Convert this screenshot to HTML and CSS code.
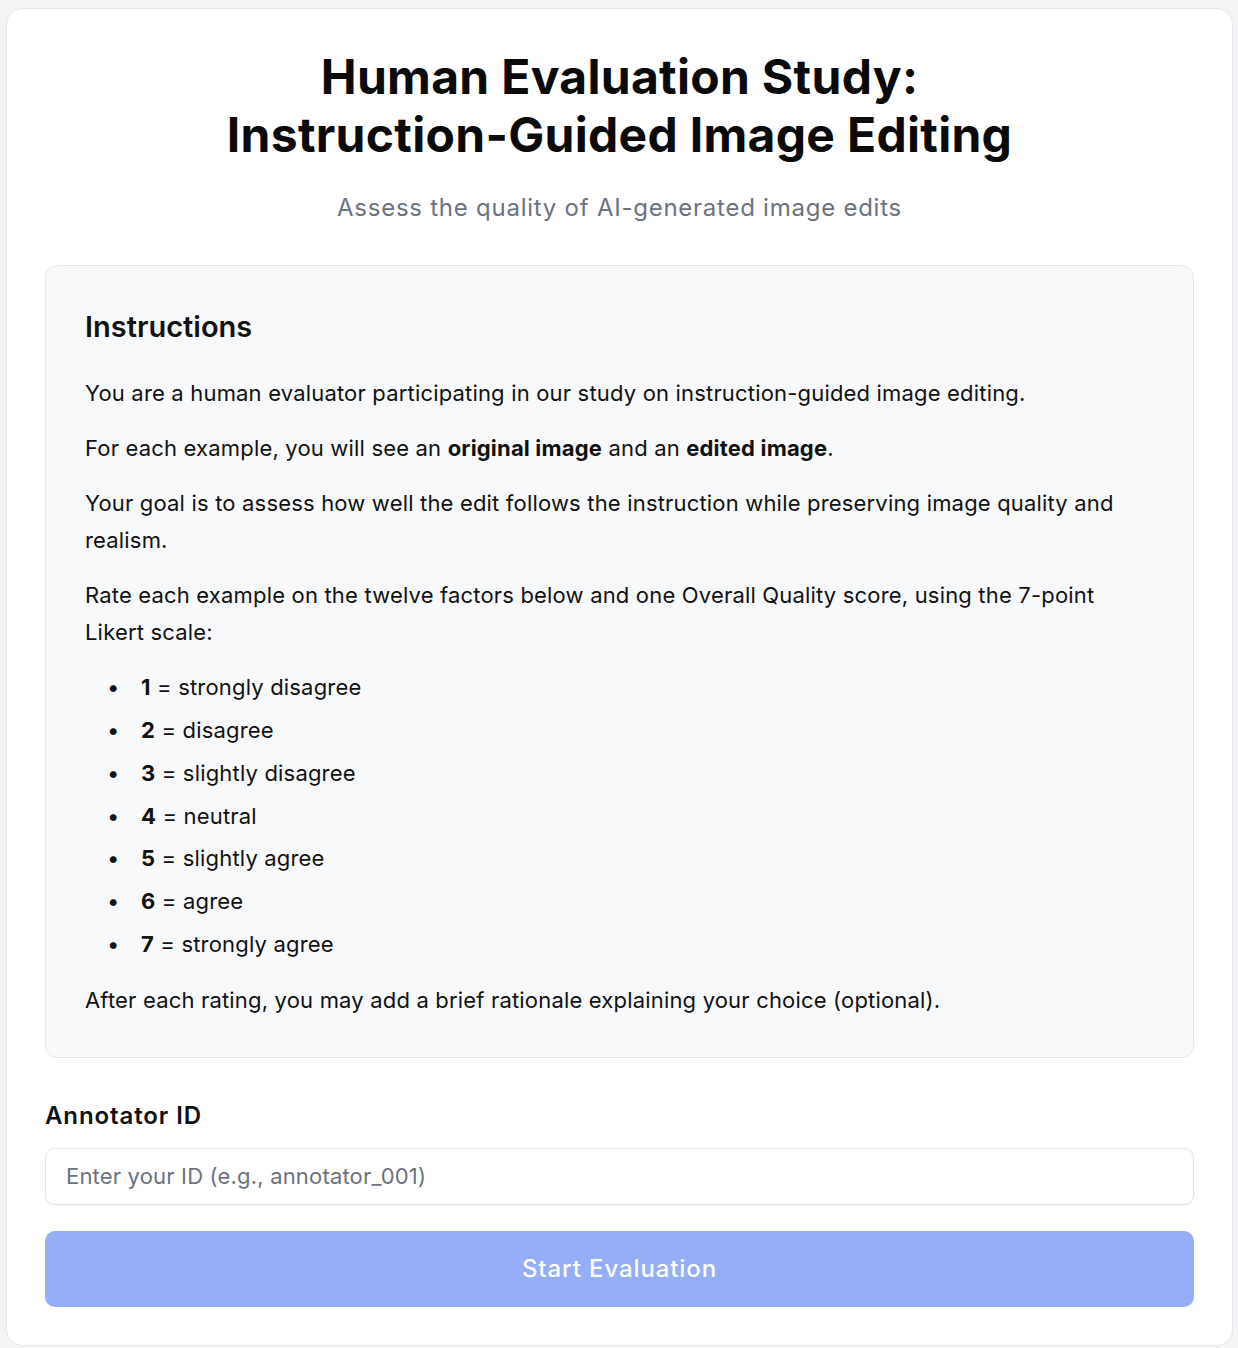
FILE: index.html
```html
<!DOCTYPE html>
<html lang="en">
<head>
<meta charset="utf-8">
<title>Human Evaluation Study</title>
<link rel="stylesheet" href="styles.css">
</head>
<body>
<main class="card">
  <h1 class="title">Human Evaluation Study:<br>Instruction-Guided Image Editing</h1>
  <p class="subtitle">Assess the quality of AI-generated image edits</p>

  <section class="instructions">
    <h2 class="instructions-heading">Instructions</h2>
    <p class="para">You are a human evaluator participating in our study on instruction-guided image editing.</p>
    <p class="para">For each example, you will see an <strong>original image</strong> and an <strong>edited image</strong>.</p>
    <p class="para">Your goal is to assess how well the edit follows the instruction while preserving image quality and realism.</p>
    <p class="para">Rate each example on the twelve factors below and one Overall Quality score, using the 7-point Likert scale:</p>
    <ul class="scale">
      <li><strong>1</strong> = strongly disagree</li>
      <li><strong>2</strong> = disagree</li>
      <li><strong>3</strong> = slightly disagree</li>
      <li><strong>4</strong> = neutral</li>
      <li><strong>5</strong> = slightly agree</li>
      <li><strong>6</strong> = agree</li>
      <li><strong>7</strong> = strongly agree</li>
    </ul>
    <p class="para last">After each rating, you may add a brief rationale explaining your choice (optional).</p>
  </section>

  <label class="field-label" for="annotator">Annotator ID</label>
  <input class="field-input" id="annotator" type="text" placeholder="Enter your ID (e.g., annotator_001)">
  <button class="start-btn" type="button">Start Evaluation</button>
</main>
</body>
</html>
```

FILE: styles.css
```css
* { box-sizing: border-box; }

html, body {
  background: #f3f4f6;
}

body {
  margin: 0;
  padding: 8px 5px 2px 6px;
  font-family: Inter, "Noto Sans", "Liberation Sans", sans-serif;
  color: #111111;
}

.card {
  background: #ffffff;
  border: 1px solid #e5e7eb;
  border-radius: 16px;
  padding: 39px 38px 38px 38px;
  display: flex;
  flex-direction: column;
}

.title {
  margin: 0;
  font-size: 48px;
  line-height: 57.6px;
  font-weight: 700;
  text-align: center;
  color: #0a0a0a;
  letter-spacing: 0.3px;
}

.subtitle {
  margin: 27px 0 0;
  font-size: 24px;
  line-height: 36px;
  text-align: center;
  color: #6b7280;
  letter-spacing: 0.75px;
}

.instructions {
  margin-top: 39px;
  background: #f8f9fb;
  border: 1px solid #e5e7eb;
  border-radius: 12px;
  padding: 40px 39px 38px;
}

.instructions-heading {
  margin: 0 0 27px;
  font-size: 29px;
  line-height: 42px;
  font-weight: 600;
  color: #111111;
}

.para {
  margin: 0 0 18px;
  font-size: 22px;
  line-height: 37px;
  letter-spacing: 0.18px;
  color: #111111;
}

.para strong, .scale strong {
  font-weight: 700;
}

.para.last {
  margin-bottom: 0;
}

.scale {
  margin: 0 0 19px;
  padding-left: 56px;
  list-style: none;
  font-size: 22px;
  line-height: 37px;
  letter-spacing: 0.18px;
}

.scale li {
  margin-bottom: 5.8px;
}

.scale li::before {
  content: "\2022";
  display: inline-block;
  width: 34px;
  margin-left: -34px;
}

.scale li:last-child {
  margin-bottom: 0;
}

.field-label {
  margin-top: 40px;
  font-size: 24px;
  line-height: 36px;
  font-weight: 600;
  letter-spacing: 0.9px;
  color: #111111;
}

.field-input {
  margin-top: 14px;
  height: 57px;
  width: 100%;
  border: 1px solid #e2e4ea;
  border-radius: 10px;
  padding: 0 20px;
  font-family: inherit;
  font-size: 22px;
  letter-spacing: 0.18px;
  color: #111111;
  background: #ffffff;
  box-shadow: 0 1px 2px rgba(0, 0, 0, 0.05);
  outline: none;
}

.field-input::placeholder {
  color: #6b7280;
}

.start-btn {
  margin-top: 26px;
  height: 76px;
  width: 100%;
  border: none;
  border-radius: 10px;
  background: #96aef8;
  color: #ffffff;
  font-family: inherit;
  font-size: 24px;
  font-weight: 500;
  letter-spacing: 0.9px;
  cursor: not-allowed;
}
```
